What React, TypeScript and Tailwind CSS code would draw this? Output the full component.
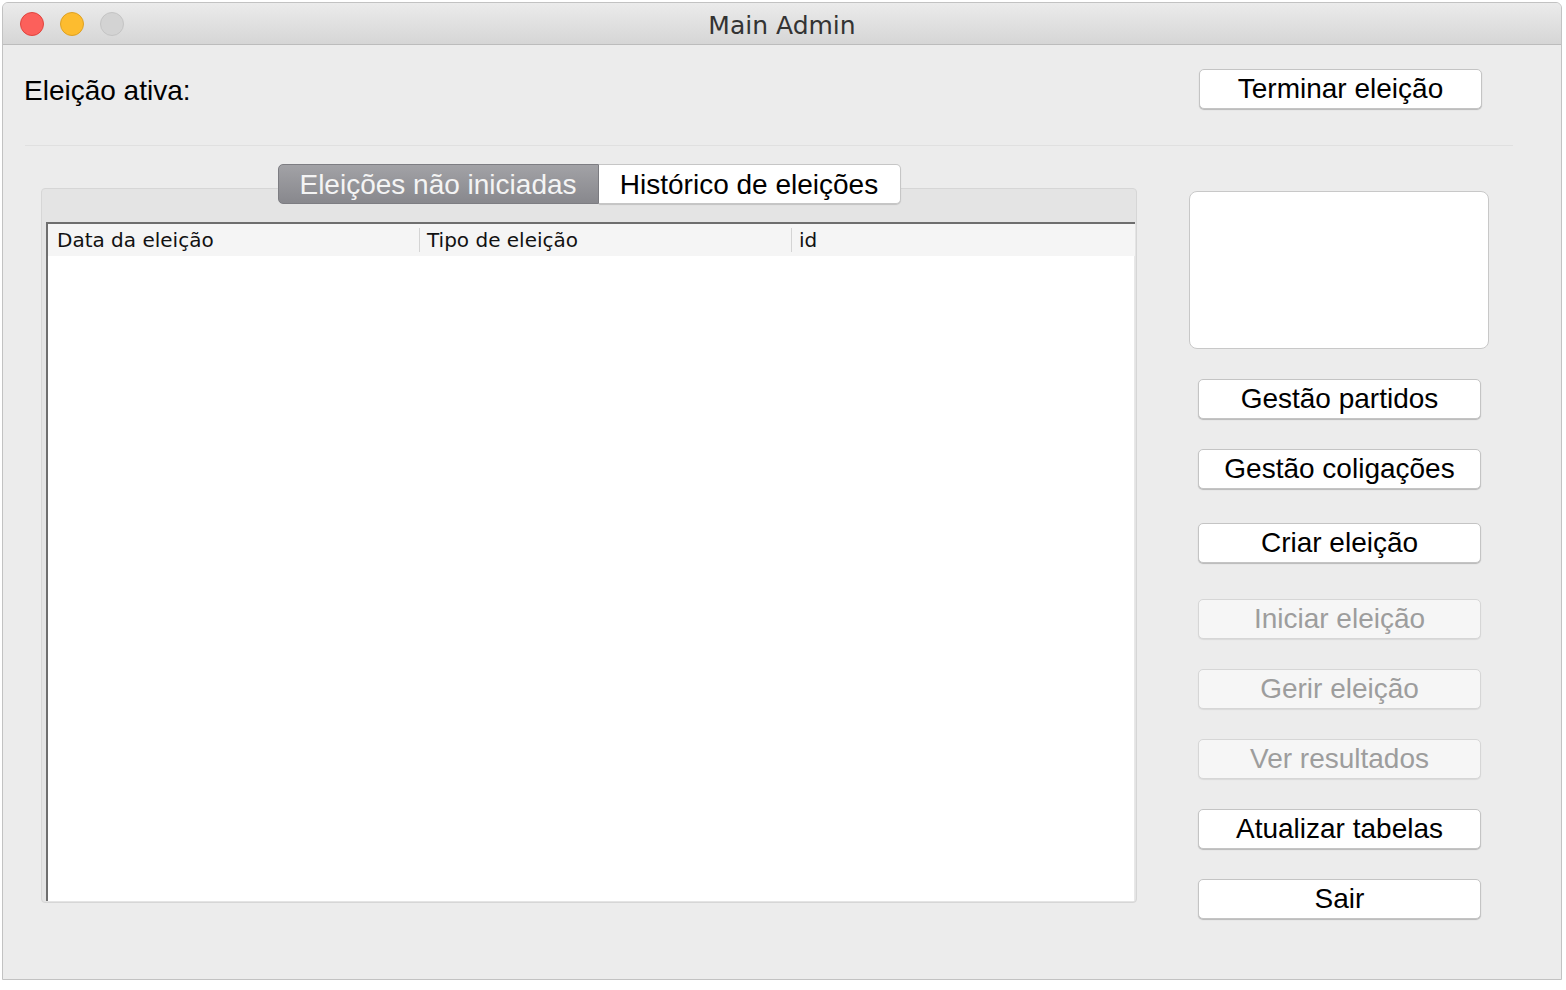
import React from "react";

const sans = { fontFamily: '"Liberation Sans", Arial, sans-serif' };
const dejavu = { fontFamily: '"DejaVu Sans", "Liberation Sans", sans-serif' };

function Btn({ label, disabled, className = "" }: { label: string; disabled?: boolean; className?: string }) {
  return (
    <div
      className={
        "ml-[9px] flex h-[40px] w-[283px] items-center justify-center rounded-[5px] border text-[28px] leading-none " +
        (disabled
          ? "border-[#d6d6d6] bg-[#f6f6f6] text-[#9d9d9d] shadow-[0_1px_1px_rgba(0,0,0,0.08)] "
          : "border-[#c4c4c4] bg-white text-black shadow-[0_1px_1px_rgba(0,0,0,0.22)] ") +
        className
      }
      style={sans}
    >
      {label}
    </div>
  );
}

export default function App() {
  return (
    <div className="h-[990px] w-[1566px] bg-white pl-[2px] pt-[2px]">
      <div className="flex h-[978px] w-[1560px] flex-col overflow-hidden rounded-t-[6px] border border-[#c2c2c2] bg-[#ececec]">
        {/* Title bar */}
        <div className="relative flex h-[42px] shrink-0 items-center justify-center border-b border-[#bcbcbc] bg-gradient-to-b from-[#ebebeb] to-[#d6d6d6]">
          <div className="absolute left-[17px] top-[9px] flex gap-[16px]">
            <div className="h-[24px] w-[24px] rounded-full border border-[#e0443e] bg-[#fc605b]" />
            <div className="h-[24px] w-[24px] rounded-full border border-[#dea123] bg-[#fdbc2f]" />
            <div className="h-[24px] w-[24px] rounded-full border border-[#c4c4c4] bg-[#d3d3d3]" />
          </div>
          <div className="mt-[4px] text-[25px] leading-none text-[#333]" style={dejavu}>
            Main Admin
          </div>
        </div>

        {/* Top row */}
        <div className="mt-[24px] flex h-[40px] items-center">
          <div className="ml-[21px] mt-[3px] text-[28px] leading-none text-black" style={sans}>
            Eleição ativa:
          </div>
          <div
            className="ml-auto mr-[79px] flex h-[40px] w-[283px] items-center justify-center rounded-[5px] border border-[#c4c4c4] bg-white text-[28px] leading-none text-black shadow-[0_1px_1px_rgba(0,0,0,0.22)]"
            style={sans}
          >
            Terminar eleição
          </div>
        </div>

        {/* Separator */}
        <div className="ml-[22px] mt-[36px] h-px w-[1488px] bg-[#e0e0e0]" />

        {/* Main */}
        <div className="flex items-start">
          {/* Tab pane */}
          <div className="ml-[38px] flex w-[1096px] flex-col pt-[18px]">
            <div className="relative z-10 flex h-[40px] justify-center">
              <div
                className="flex w-[321px] items-center justify-center rounded-l-[5px] border border-[#7d7d82] bg-gradient-to-b from-[#a2a2a6] to-[#88888d] pt-[2px] text-[28px] leading-none text-[#f4f4f4]"
                style={sans}
              >
                Eleições não iniciadas
              </div>
              <div
                className="flex w-[302px] items-center justify-center rounded-r-[5px] border border-l-0 border-[#c6c6c6] bg-white pt-[2px] text-[28px] leading-none text-black shadow-[0_1px_1px_rgba(0,0,0,0.15)]"
                style={sans}
              >
                Histórico de eleições
              </div>
            </div>
            <div className="-mt-[16px] flex h-[715px] flex-col rounded-[4px] border border-[#d6d6d6] bg-[#e4e4e4] pb-[1px] pl-[4px] pr-[1px] pt-[33px]">
              <div className="flex h-[679px] flex-col border-l-2 border-t-2 border-[#6e6e6e] bg-white">
                <div className="flex h-[32px] items-center bg-[#f5f5f5] text-[20px] leading-none text-[#111]" style={dejavu}>
                  <div className="flex h-full w-[371px] items-center pl-[9px]">Data da eleição</div>
                  <div className="h-[24px] w-px bg-[#d4d4d4]" />
                  <div className="flex h-full w-[371px] items-center pl-[7px]">Tipo de eleição</div>
                  <div className="h-[24px] w-px bg-[#d4d4d4]" />
                  <div className="flex h-full flex-1 items-center pl-[7px]">id</div>
                </div>
                <div className="flex-1 border-r border-[#e8e8e8] bg-white" />
              </div>
            </div>
          </div>

          {/* Right column */}
          <div className="ml-[52px] flex w-[300px] flex-col pt-[45px]">
            <div className="h-[158px] w-[300px] rounded-[8px] border border-[#c8c8c8] bg-white" />
            <Btn label="Gestão partidos" className="mt-[30px]" />
            <Btn label="Gestão coligações" className="mt-[30px]" />
            <Btn label="Criar eleição" className="mt-[34px]" />
            <Btn label="Iniciar eleição" disabled className="mt-[36px]" />
            <Btn label="Gerir eleição" disabled className="mt-[30px]" />
            <Btn label="Ver resultados" disabled className="mt-[30px]" />
            <Btn label="Atualizar tabelas" className="mt-[30px]" />
            <Btn label="Sair" className="mt-[30px]" />
          </div>
        </div>
      </div>
    </div>
  );
}
